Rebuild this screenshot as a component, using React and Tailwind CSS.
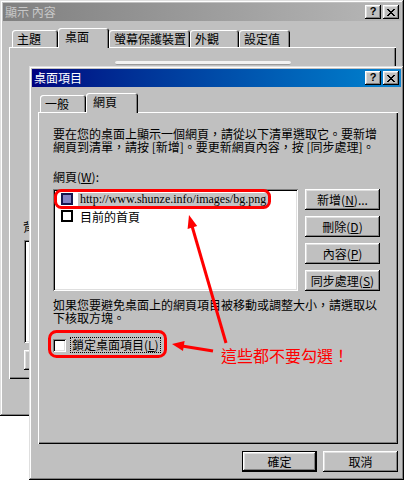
import React from 'react'

const raisedWin =
  'shadow-[inset_-1px_-1px_#000000,inset_1px_1px_#dfdfdf,inset_-2px_-2px_#808080,inset_2px_2px_#ffffff]'
const raisedBtn =
  'shadow-[inset_-1px_-1px_#000000,inset_1px_1px_#ffffff,inset_-2px_-2px_#808080,inset_2px_2px_#dfdfdf]'
const sunken =
  'shadow-[inset_1px_1px_#808080,inset_-1px_-1px_#ffffff,inset_2px_2px_#000000,inset_-2px_-2px_#dfdfdf]'
const panelEdge =
  'shadow-[inset_1px_1px_#ffffff,inset_-1px_-1px_#000000,inset_-2px_-2px_#808080]'
const tabEdge =
  'rounded-t-[3px] shadow-[inset_1px_1px_#ffffff,inset_-1px_0_#000000,inset_-2px_0_#808080]'

function CloseGlyph() {
  return (
    <svg width="8" height="7" viewBox="0 0 8 7">
      <path
        fill="#000"
        d="M0 0h2v1H0zM6 0h2v1H6zM1 1h2v1H1zM5 1h2v1H5zM2 2h4v1H2zM3 3h2v1H3zM2 4h4v1H2zM1 5h2v1H1zM5 5h2v1H5zM0 6h2v1H0zM6 6h2v1H6z"
      />
    </svg>
  )
}

function TitleBar({ title, active }) {
  return (
    <div
      className={`h-[18px] flex items-center justify-between pl-[2px] pr-[2px] ${
        active
          ? 'bg-linear-to-r from-[#000080] to-[#1084d0] text-white'
          : 'bg-linear-to-r from-[#808080] to-[#b8b8b8] text-[#c8c8c8]'
      }`}
    >
      <span className="text-[12px] leading-[12px] whitespace-nowrap">{title}</span>
      <div className="flex gap-[2px]">
        <div className={`w-[16px] h-[14px] bg-[#c0c0c0] flex items-center justify-center ${raisedBtn}`}>
          <span className="font-['Liberation_Sans',sans-serif] font-bold text-[11px] leading-none text-black -mt-px">?</span>
        </div>
        <div className={`w-[16px] h-[14px] bg-[#c0c0c0] flex items-center justify-center ${raisedBtn}`}>
          <CloseGlyph />
        </div>
      </div>
    </div>
  )
}

function Tab({ label, width, selected }) {
  return (
    <div
      className={`bg-[#c0c0c0] text-[12px] leading-[12px] whitespace-nowrap pt-[3px] ${tabEdge} ${
        selected ? 'h-[20px] -mb-px pl-[7px]' : 'h-[17px] pl-[5px]'
      }`}
      style={{ width }}
    >
      {label}
    </div>
  )
}

function Button({ children, isDefault }) {
  if (isDefault) {
    return (
      <div className="w-[75px] h-[21px] border border-black">
        <div className={`w-full h-full bg-[#c0c0c0] flex items-center justify-center text-[12px] leading-[12px] ${raisedBtn}`}>
          {children}
        </div>
      </div>
    )
  }
  return (
    <div className={`w-[75px] h-[21px] bg-[#c0c0c0] flex items-center justify-center text-[12px] leading-[12px] whitespace-nowrap ${raisedBtn}`}>
      {children}
    </div>
  )
}

function BackWindow() {
  return (
    <div className={`absolute left-0 top-0 w-[404px] h-[416px] bg-[#c0c0c0] p-[3px] ${raisedWin}`}>
      <TitleBar title="顯示 內容" />
      <div className="ml-[6px] mt-[7px] h-[19px] flex items-end relative z-10">
        <div className="w-[3px]" />
        <Tab label="主題" width={46} />
        <Tab label="桌面" width={51} selected />
        <Tab label="螢幕保護裝置" width={81} />
        <Tab label="外觀" width={49} />
        <Tab label="設定值" width={51} />
      </div>
      <div className={`ml-[6px] w-[387px] h-[332px] flex flex-col ${panelEdge}`}>
        <div className="mt-[14px] ml-[106px] w-[176px] h-[4px] rounded-[2px] bg-[#f2f2f2] border-b border-[#9a9a9a]" />
        <div className="mt-[155px] ml-[14px] text-[12px] leading-[13px]">背景(K):</div>
        <div className={`mt-[7px] ml-[15px] w-[200px] h-[103px] bg-white ${sunken}`} />
        <div className={`mt-[7px] ml-[15px] w-[100px] h-[20px] bg-[#c0c0c0] ${raisedBtn}`} />
      </div>
    </div>
  )
}

function FrontWindow() {
  return (
    <div className={`absolute left-[29px] top-[66px] w-[375px] h-[414px] bg-[#c0c0c0] p-[3px] ${raisedWin}`}>
      <TitleBar title="桌面項目" active />
      <div className="ml-[6px] mt-[6px] h-[19px] flex items-end relative z-10">
        <div className="w-[2px]" />
        <Tab label="一般" width={46} />
        <Tab label="網頁" width={52} selected />
      </div>
      <div className={`ml-[6px] w-[360px] h-[332px] pt-[15px] pl-[15px] ${panelEdge}`}>
        <p className="text-[12px] leading-[13px] whitespace-nowrap">
          要在您的桌面上顯示一個網頁，請從以下清單選取它。要新增
          <br />
          網頁到清單，請按 [新增]。要更新網頁內容，按 [同步處理]。
        </p>
        <div className="mt-[17px] text-[12px] leading-[13px]">
          網頁(<span className="underline">W</span>):
        </div>
        <div className="mt-[6px] flex">
          <div className={`w-[245px] h-[102px] bg-white pt-[4px] pl-[8px] ${sunken}`}>
            <div className="h-[17px] flex items-start">
              <div className="w-[12px] h-[12px] border-2 border-[#16164e] bg-[#8482c4]" />
              <span className="ml-[5px] px-[2px] h-[13px] bg-[#c4c4c4] font-['Liberation_Serif',serif] text-[12px] leading-[13px] whitespace-nowrap">
                http://www.shunze.info/images/bg.png
              </span>
            </div>
            <div className="h-[17px] flex items-start">
              <div className="w-[12px] h-[12px] border-2 border-black bg-white" />
              <span className="ml-[7px] text-[12px] leading-[13px] whitespace-nowrap">目前的首頁</span>
            </div>
          </div>
          <div className="ml-[7px] flex flex-col gap-[6px]">
            <Button>
              新增(<span className="underline">N</span>)...
            </Button>
            <Button>
              刪除(<span className="underline">D</span>)
            </Button>
            <Button>
              內容(<span className="underline">P</span>)
            </Button>
            <Button>
              同步處理(<span className="underline">S</span>)
            </Button>
          </div>
        </div>
        <p className="mt-[7px] text-[12px] leading-[13px] whitespace-nowrap">
          如果您要避免桌面上的網頁項目被移動或調整大小，請選取以
          <br />
          下核取方塊。
        </p>
        <div className="mt-[13px] flex items-center">
          <div className={`w-[13px] h-[13px] bg-white ${sunken}`} />
          <div className="ml-[4px] h-[16px] px-[1px] border border-dotted border-black text-[12px] leading-[14px] whitespace-nowrap">
            鎖定桌面項目(<span className="underline">L</span>)
          </div>
        </div>
      </div>
      <div className="ml-[6px] mt-[7px] w-[360px] flex justify-end gap-[6px]">
        <Button isDefault>確定</Button>
        <Button>取消</Button>
      </div>
    </div>
  )
}

function Annotations() {
  return (
    <>
      <svg className="absolute left-0 top-0 pointer-events-none" width="405" height="480" viewBox="0 0 405 480">
        <rect x="55.5" y="190.5" width="214" height="17" rx="6" fill="none" stroke="#ff0000" strokeWidth="3" />
        <rect x="49.5" y="331.5" width="116" height="25" rx="7" fill="none" stroke="#ff0000" strokeWidth="3" />
        <line x1="226" y1="343" x2="192" y2="226" stroke="#ff0000" strokeWidth="3" />
        <polygon points="189,215 197.2,226.1 187.6,228.9" fill="#ff0000" />
        <line x1="213" y1="351" x2="182" y2="346" stroke="#ff0000" strokeWidth="3" />
        <polygon points="172,344 184.6,341.1 183,350.9" fill="#ff0000" />
      </svg>
      <div className="absolute left-[221px] top-[347px] text-[16px] leading-[16px] text-[#ff0000] whitespace-nowrap">
        這些都不要勾選！
      </div>
    </>
  )
}

export default function App() {
  return (
    <div className="relative w-[405px] h-[480px] bg-white overflow-hidden text-black font-['Noto_Sans_CJK_TC',sans-serif]">
      <BackWindow />
      <FrontWindow />
      <Annotations />
    </div>
  )
}
